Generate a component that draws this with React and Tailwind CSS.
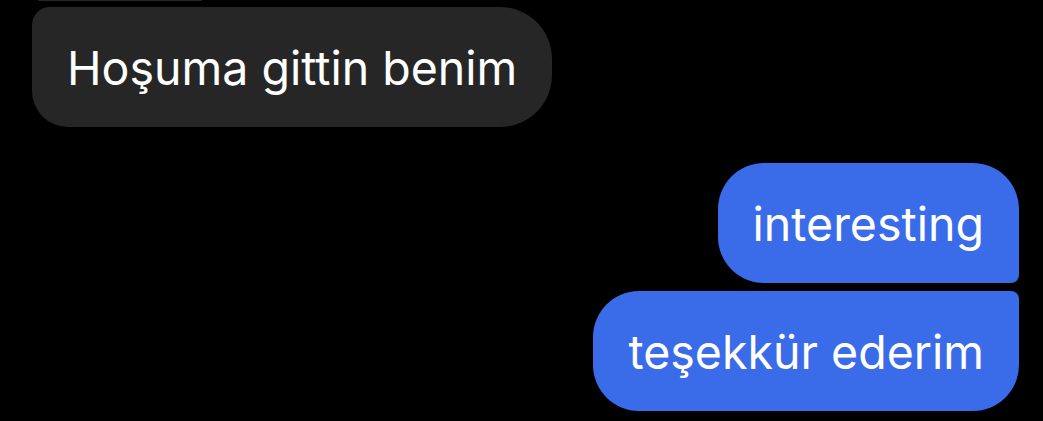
const Bubble = ({ from, className, children }) => {
  const tone = from === "me" ? "bg-[#3a6be9]" : "bg-[#262626]";
  return (
    <div
      className={`flex h-[120px] items-center px-[35px] pt-[2px] text-[46.5px] leading-none text-white ${tone} ${className}`}
    >
      {children}
    </div>
  );
};

export default function App() {
  return (
    <div
      className="flex h-[421px] w-full flex-col overflow-hidden bg-black"
      style={{ fontFamily: "Inter, 'Noto Sans', sans-serif" }}
    >
      {/* tail end of the previous incoming bubble */}
      <div className="ml-[38px] h-[1px] w-[164px] bg-[#262626]" />

      <div className="mt-[6px] flex pl-[32px]">
        <Bubble from="them" className="rounded-tl-[18px] rounded-bl-[36px] rounded-r-[52px]">
          Hoşuma gittin benim
        </Bubble>
      </div>

      <div className="mt-[36px] flex flex-col items-end gap-[8px] pr-[24px]">
        <Bubble from="me" className="h-[119px] rounded-l-[46px] rounded-tr-[46px] rounded-br-[8px]">
          interesting
        </Bubble>
        <Bubble from="me" className="h-[119px] rounded-l-[46px] rounded-tr-[8px] rounded-br-[46px]">
          teşekkür ederim
        </Bubble>
      </div>
    </div>
  );
}
